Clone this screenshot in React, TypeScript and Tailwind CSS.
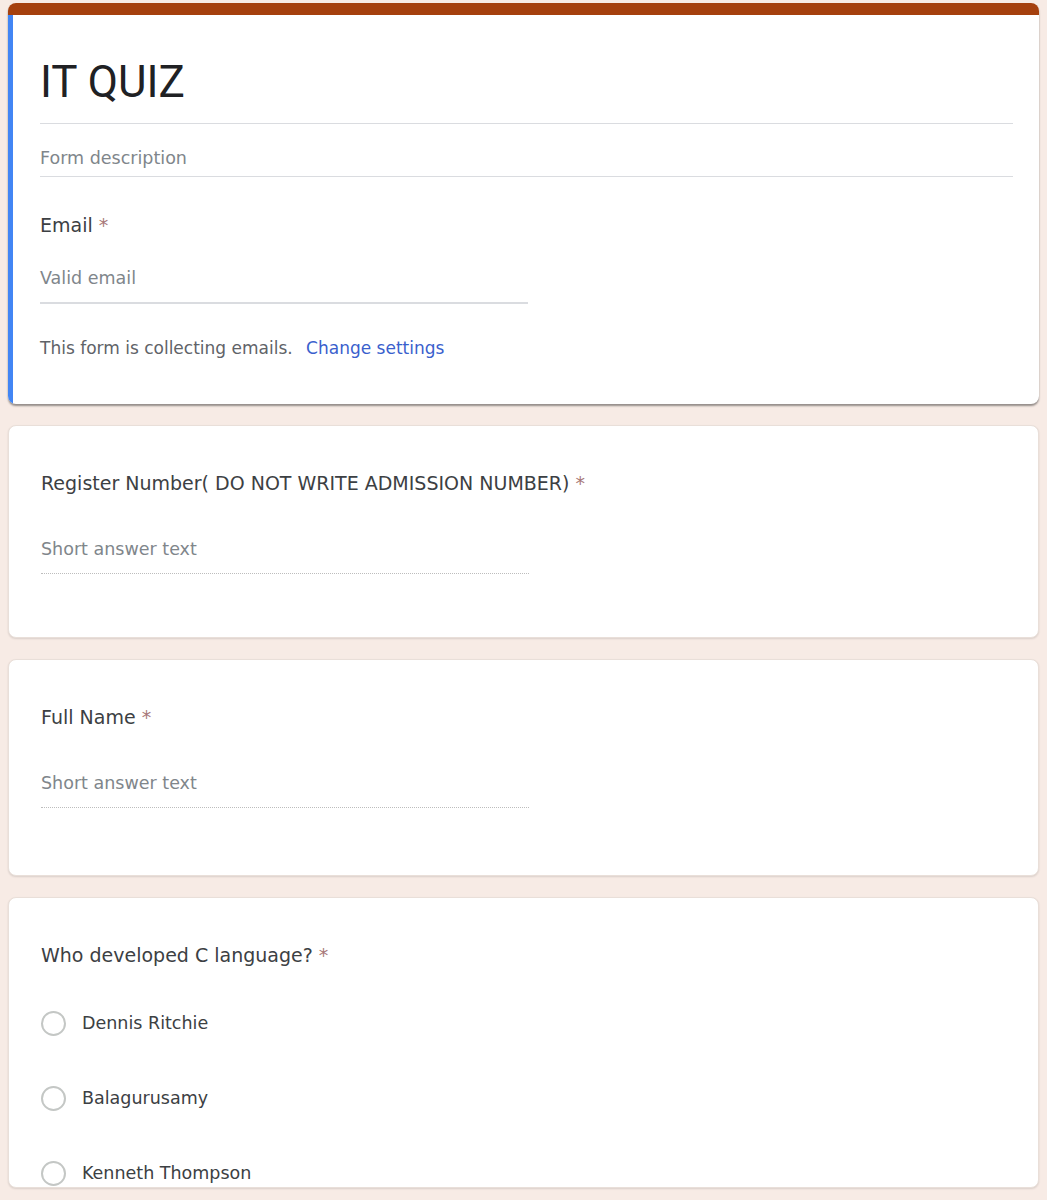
import React from "react";

const body = { fontFamily: "'DejaVu Sans', 'Liberation Sans', sans-serif" };

const Star = () => <span className="text-[#a87878]"> *</span>;

const ShortAnswer: React.FC<{ label: string; tall?: boolean }> = ({
  label,
  tall,
}) => (
  <div
    className={`shrink-0 rounded-lg border border-[#e9dfd9] bg-white px-8 pt-[45px] shadow-[0_1px_2px_rgba(0,0,0,0.12)] ${
      tall ? "pb-[67px]" : "pb-[63px]"
    }`}
  >
    <div className="text-[19px] leading-6 text-[#3c4043]">
      {label}
      <Star />
    </div>
    <div className="mt-[44px] w-[488px] border-b border-dotted border-[#bdbdbd] pb-[14px] text-[17.5px] leading-5 text-[#80868b]">
      Short answer text
    </div>
  </div>
);

const Option: React.FC<{ label: string }> = ({ label }) => (
  <div className="flex h-[75px] items-center gap-4">
    <span className="h-[25px] w-[25px] shrink-0 rounded-full border-2 border-[#c4c7c5]" />
    <span className="text-[17.5px] text-[#3c4043]">{label}</span>
  </div>
);

export default function App() {
  return (
    <div
      className="flex h-[1200px] flex-col gap-[21px] overflow-hidden bg-[#f7ebe5] px-2 pt-[3px]"
      style={body}
    >
      {/* header card */}
      <div className="shrink-0 overflow-hidden rounded-lg bg-white shadow-[0_2px_2px_rgba(0,0,0,0.4)]">
        <div className="h-[12px] bg-[#a5400e]" />
        <div className="border-l-[5px] border-[#4285f4] pl-[27px] pr-[26px] pt-[41px] pb-[46px]">
          <div
            className="border-b border-[#dadce0] pb-[15px] text-[44px] leading-[52px] text-[#202124]"
            style={{ fontFamily: "Roboto, 'Liberation Sans', sans-serif" }}
          >
            IT QUIZ
          </div>
          <div className="border-b border-[#dadce0] pt-[24px] pb-[8px] text-[17.5px] leading-5 text-[#80868b]">
            Form description
          </div>
          <div className="mt-[36px] text-[19px] leading-6 text-[#3c4043]">
            Email
            <Star />
          </div>
          <div className="mt-[31px] w-[488px] border-b-2 border-[#dadce0] pb-[14px] text-[17.5px] leading-5 text-[#80868b]">
            Valid email
          </div>
          <div className="mt-[34px] text-[17px] leading-5 text-[#5f6368]">
            This form is collecting emails.{" "}
            <span className="ml-2 text-[#3a5fcd]">Change settings</span>
          </div>
        </div>
      </div>

      <ShortAnswer label="Register Number( DO NOT WRITE ADMISSION NUMBER)" />
      <ShortAnswer label="Full Name" tall />

      <div className="h-[291px] shrink-0 overflow-hidden rounded-lg border border-[#e9dfd9] bg-white px-8 pt-[45px] shadow-[0_1px_2px_rgba(0,0,0,0.12)]">
        <div className="text-[19px] leading-6 text-[#3c4043]">
          Who developed C language?
          <Star />
        </div>
        <div className="mt-[19px]">
          <Option label="Dennis Ritchie" />
          <Option label="Balagurusamy" />
          <Option label="Kenneth Thompson" />
        </div>
      </div>
    </div>
  );
}
